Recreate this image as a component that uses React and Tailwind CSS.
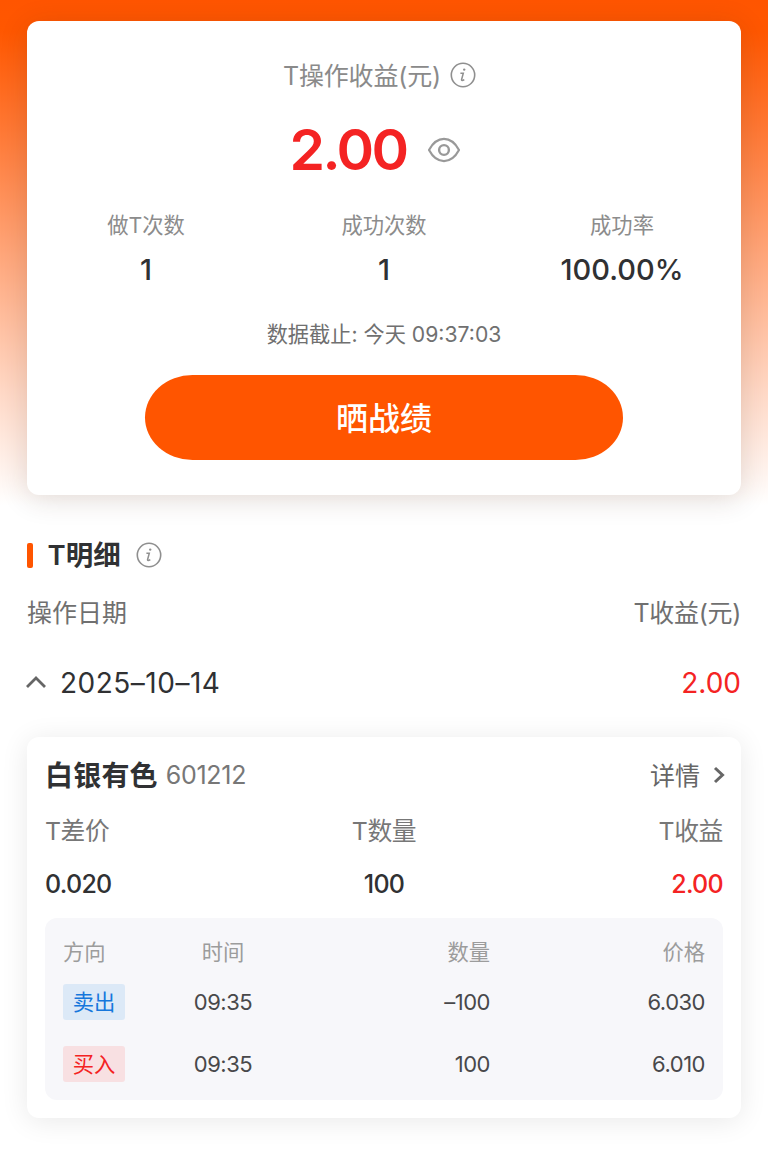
import React from 'react';

const stats = [
  { label: '做T次数', value: '1' },
  { label: '成功次数', value: '1' },
  { label: '成功率', value: '100.00%' },
];

const trades = [
  { side: '卖出', time: '09:35', quantity: '–100', price: '6.030' },
  { side: '买入', time: '09:35', quantity: '100', price: '6.010' },
];

const InfoIcon = () => (
  <svg className="size-[26px] shrink-0" viewBox="0 0 26 26" fill="none" stroke="#8f8f8f">
    <circle cx="13" cy="13" r="11.7" strokeWidth="1.6" />
    <circle cx="14.2" cy="7.6" r="1.2" fill="#8f8f8f" stroke="none" />
    <path d="M10.4 11.2h2.9l-1.7 6.3c-.3 1.3.8 1.5 2.7.1" strokeWidth="1.5" />
  </svg>
);

const EyeIcon = () => (
  <svg className="h-[26px] w-[34px] shrink-0" viewBox="0 0 34 26" fill="none" stroke="#999" strokeWidth="2.2">
    <path d="M2 13C6.2 5.2 11 1.9 17 1.9S27.8 5.2 32 13c-4.2 7.8-9 11.1-15 11.1S6.2 20.8 2 13Z" strokeLinejoin="round" />
    <circle cx="17" cy="13" r="4.9" strokeWidth="2.4" />
  </svg>
);

const SummaryCard = () => (
  <section className="h-[474px] rounded-xl bg-white pt-[29px] shadow-[0_4px_28px_rgba(70,40,25,0.16)]">
    <div className="flex h-[50px] items-center justify-center gap-[9px] pr-[9px]">
      <span className="pt-[3px] text-[25px] tracking-[-0.15px] text-[#8a8a8a]">T操作收益(元)</span>
      <InfoIcon />
    </div>
    <div className="flex h-[100px] items-center justify-center gap-[21px] pr-[17px]">
      <span className="text-[57px] font-semibold tracking-[-2.6px] text-[#f42323]">2.00</span>
      <EyeIcon />
    </div>

    <div className="grid grid-cols-3 text-center">
      {stats.map((stat) => (
        <div key={stat.label}>
          <div className="h-12 text-[21.3px] leading-[50px] text-[#8c8c8c]">{stat.label}</div>
          <div className="h-11 text-[29px] font-[550] leading-[44px]">{stat.value}</div>
        </div>
      ))}
    </div>

    <p className="mt-[17px] h-12 text-center text-[21.2px] leading-[50px] text-[#707070]">
      数据截止: 今天 09:37:03
    </p>
    <button className="mx-auto mt-[18px] block h-[85px] w-[478px] rounded-[48px/43px] bg-[#ff5500] pt-0.5 text-[32px] font-medium text-white">
      晒战绩
    </button>
  </section>
);

const TradeCard = () => (
  <section className="mt-[17px] h-[381px] rounded-xl bg-white px-[18px] pt-2.5 shadow-[0_3px_28px_rgba(0,0,0,0.09)]">
    <div className="flex h-14 items-center">
      <span className="pt-px text-[28px] font-bold tracking-[0.2px]">白银有色</span>
      <span className="ml-2 pt-0.5 text-[25px] tracking-[-0.3px] text-[#777]">601212</span>
      <span className="ml-auto pt-[3px] text-[25px] text-[#666]">详情</span>
      <svg className="ml-[13px] mr-[-2px] h-[18px] w-3" viewBox="0 0 12 18" fill="none" stroke="#666" strokeWidth="3">
        <path d="m2 2 7.5 7L2 16" />
      </svg>
    </div>

    <div className="grid h-14 grid-cols-3 items-center pt-px text-[24.8px] text-[#777]">
      <span className="tracking-[-0.4px]">T差价</span>
      <span className="text-center tracking-[-0.4px]">T数量</span>
      <span className="text-right tracking-[-0.4px]">T收益</span>
    </div>
    <div className="grid h-[50px] grid-cols-3 items-center pt-px text-[25px] font-medium tracking-[-0.7px]">
      <span>0.020</span>
      <span className="text-center">100</span>
      <span className="text-right text-[#f42323]">2.00</span>
    </div>

    {/* Individual orders */}
    <div className="mt-[9px] h-[182px] rounded-xl bg-[#f7f7fa] px-[18px] pt-[13px]">
      <div className="grid h-10 grid-cols-[100px_120px_207px_215px] items-center pt-[3px] text-[21.3px] text-[#9c9c9c]">
        <span>方向</span>
        <span className="text-center">时间</span>
        <span className="text-right">数量</span>
        <span className="text-right">价格</span>
      </div>
      {trades.map((trade) => (
        <div
          key={trade.side}
          className="grid h-[62px] grid-cols-[100px_120px_207px_215px] items-center text-[22px] tracking-[-0.5px] text-[#48484a]"
        >
          <span
            className={`flex h-9 w-[62px] items-center justify-center rounded-[3px] pt-0.5 text-[21.3px] tracking-normal ${
              trade.side === '卖出' ? 'bg-[#dce9f7] text-[#1677dc]' : 'bg-[#f8e0e2] text-[#f42323]'
            }`}
          >
            {trade.side}
          </span>
          <span className="text-center">{trade.time}</span>
          <span className="text-right">{trade.quantity}</span>
          <span className="text-right">{trade.price}</span>
        </div>
      ))}
    </div>
  </section>
);

const App = () => {
  return (
    <div className="h-[1153px] w-[768px] overflow-hidden whitespace-nowrap bg-white bg-[linear-gradient(180deg,#ff5500_0px,#ff5700_30px,#ff7c3a_140px,#ffac83_270px,#ffd8c5_390px,#ffffff_505px)] px-[27px] pt-[21px] font-['Inter','Noto_Sans_CJK_SC',sans-serif] text-[#303133]">
      <SummaryCard />

      <div className="mt-[35px] flex h-[50px] items-center">
        <span className="h-[25px] w-[5.5px] rounded-[2px] bg-[#ff5500]" />
        <h2 className="ml-[15px] pt-px text-[27.5px] font-semibold">T明细</h2>
        <span className="ml-[15px]">
          <InfoIcon />
        </span>
      </div>

      <div className="flex h-16 items-center justify-between pt-[3px] text-[25px] text-[#707070]">
        <span>操作日期</span>
        <span className="tracking-[-0.3px]">T收益(元)</span>
      </div>
      <div className="flex h-[76px] items-center text-[28px]">
        <svg className="-ml-px h-3.5 w-5" viewBox="0 0 20 14" fill="none" stroke="#666" strokeWidth="2.8">
          <path d="m1 12 9-9 9 9" />
        </svg>
        <span className="ml-3.5 pt-0.5 tracking-[0.5px]">2025–10–14</span>
        <span className="ml-auto pt-0.5 text-[#f42323]">2.00</span>
      </div>

      <TradeCard />
    </div>
  );
};

export default App;
